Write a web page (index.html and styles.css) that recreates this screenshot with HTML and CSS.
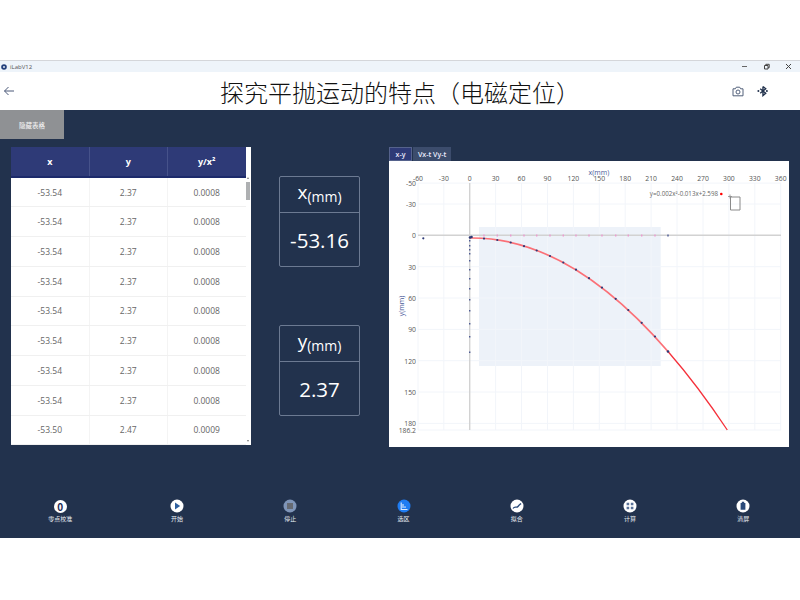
FILE: index.html
```html
<!DOCTYPE html>
<html lang="zh-CN">
<head>
    <meta charset="utf-8" />
    <title>iLabV12</title>
    <link rel="stylesheet" href="styles.css">
</head>
<body>
    <div class="top-blank"></div>

    <!-- window title bar -->
    <div class="titlebar">
        <div class="app-name">
            <svg class="app-icon" viewBox="0 0 6 6"><circle cx="3" cy="3" r="2.8" fill="#24417c"/><circle cx="3" cy="3" r="1" fill="#dfe8f5"/></svg>
            <span>iLabV12</span>
        </div>
        <div class="win-btns">
            <svg viewBox="0 0 7 7"><path d="M1 3.5h5" stroke="#666" fill="none"/></svg>
            <svg viewBox="0 0 7 7"><path d="M1.5 2.5h3.5v3.5h-3.5zM2.8 2.5v-1.2h3.4v3.4h-1.2" stroke="#444" fill="none"/></svg>
            <svg viewBox="0 0 7 7"><path d="M1 1l5 5M6 1l-5 5" stroke="#444" fill="none"/></svg>
        </div>
    </div>

    <header class="page-head">
        <svg class="back" viewBox="0 0 12 10"><path d="M11 5H1.5M5.5 1L1.5 5l4 4" stroke="#4a5878" stroke-width="1" fill="none"/></svg>
        <h1>探究平抛运动的特点（电磁定位）</h1>
        <div class="head-tools">
            <svg class="camera" viewBox="0 0 12 11"><path d="M1 2.8h2.4L4.3 1.2h3.4l.9 1.6H11v7H1z" stroke="#52607a" fill="none"/><circle cx="6" cy="6" r="2" stroke="#52607a" fill="none"/></svg>
            <svg class="bt" viewBox="0 0 12 12"><path d="M6.5 1v10l3-2.6-6-4.8M6.5 1l3 2.6-6 4.8" stroke="#22324d" stroke-width="1.5" fill="none"/><circle cx="1.5" cy="6" r="1.1" fill="#22324d"/><circle cx="10.8" cy="6" r="1.1" fill="#22324d"/></svg>
        </div>
    </header>

    <main class="main">
        <button class="hide-btn">隐藏表格</button>

        <div class="content">
            <div class="table-box">
                <table class="data-table">
                    <thead>
                        <tr><th>x</th><th>y</th><th>y/x²</th></tr>
                    </thead>
                    <tbody>
                        <tr><td>-53.54</td><td>2.37</td><td>0.0008</td></tr>
                        <tr><td>-53.54</td><td>2.37</td><td>0.0008</td></tr>
                        <tr><td>-53.54</td><td>2.37</td><td>0.0008</td></tr>
                        <tr><td>-53.54</td><td>2.37</td><td>0.0008</td></tr>
                        <tr><td>-53.54</td><td>2.37</td><td>0.0008</td></tr>
                        <tr><td>-53.54</td><td>2.37</td><td>0.0008</td></tr>
                        <tr><td>-53.54</td><td>2.37</td><td>0.0008</td></tr>
                        <tr><td>-53.54</td><td>2.37</td><td>0.0008</td></tr>
                        <tr><td>-53.50</td><td>2.47</td><td>0.0009</td></tr>
                    </tbody>
                </table>
                <div class="scrollbar"><div class="thumb"></div></div>
            </div>

            <div class="readouts">
                <div class="readout">
                    <div class="readout-name">x<small>(mm)</small></div>
                    <div class="readout-value">-53.16</div>
                </div>
                <div class="readout">
                    <div class="readout-name">y<small>(mm)</small></div>
                    <div class="readout-value">2.37</div>
                </div>
            </div>

            <div class="chart-box">
                <div class="tabs">
                    <span class="tab active">x-y</span>
                    <span class="tab">Vx-t Vy-t</span>
                </div>
                <svg class="chart" viewBox="389 161 400 286">
                    <!-- selected region -->
                    <rect x="479" y="227" width="181.7" height="139" fill="#edf2f9"/>
                    <!-- grid -->
                    <path class="grid" d="M418 183V430M443.8 183V430M495.6 183V430M521.5 183V430M547.5 183V430M573.4 183V430M599.3 183V430M625.2 183V430M651.1 183V430M677 183V430M703 183V430M728.9 183V430M754.8 183V430M780.7 183V430"/>
                    <path class="grid" d="M418 183.1H781M418 204H781M418 266.7H781M418 298H781M418 329.4H781M418 360.7H781M418 392H781M418 423.4H781M418 430H781"/>
                    <!-- axes -->
                    <path class="axis" d="M469.7 183V430M418 235.3H781"/>

                    <g class="tick-x">
                        <text x="418" y="180.5">-60</text>
                        <text x="443.8" y="180.5">-30</text>
                        <text x="469.7" y="180.5">0</text>
                        <text x="495.6" y="180.5">30</text>
                        <text x="521.5" y="180.5">60</text>
                        <text x="547.5" y="180.5">90</text>
                        <text x="573.4" y="180.5">120</text>
                        <text x="599.3" y="180.5">150</text>
                        <text x="625.2" y="180.5">180</text>
                        <text x="651.1" y="180.5">210</text>
                        <text x="677" y="180.5">240</text>
                        <text x="703" y="180.5">270</text>
                        <text x="728.9" y="180.5">300</text>
                        <text x="754.8" y="180.5">330</text>
                        <text x="780.7" y="180.5">360</text>
                    </g>
                    <g class="tick-y">
                        <text x="416" y="186">-50</text>
                        <text x="416" y="207">-30</text>
                        <text x="416" y="238">0</text>
                        <text x="416" y="269.5">30</text>
                        <text x="416" y="301">60</text>
                        <text x="416" y="332">90</text>
                        <text x="416" y="363.5">120</text>
                        <text x="416" y="395">150</text>
                        <text x="416" y="425.5">180</text>
                        <text x="416" y="432.5">186.2</text>
                    </g>
                    <text class="axis-name" x="599" y="175" text-anchor="middle">x(mm)</text>
                    <text class="axis-name" transform="translate(404 306) rotate(-90)" text-anchor="middle">y(mm)</text>

                    <!-- fitted curve: pale over the measured part, red past it -->
                    <path d="M469.7 238Q568.8 236.5 668 351.5" fill="none" stroke="#fb7077" stroke-width="1.7"/>
                    <path d="M668 351.5Q697.6 385.4 727.3 430" fill="none" stroke="#f5303a" stroke-width="1.3"/>

                    <!-- points projected on the axes -->
                    <path fill="none" stroke="#ec9ad0" stroke-width="1.4" d="M484 234.5v2M497.3 234.5v2M510.7 234.5v2M524 234.5v2M536.7 234.5v2M550 234.5v2M563.3 234.5v2M576 234.5v2M589 234.5v2M602 234.5v2M615.7 234.5v2M628.3 234.5v2M641.7 234.5v2M655 234.5v2"/>
                    <path fill="none" stroke="#4c5a94" stroke-width="1.4" d="M668 234.5v2M469.7 240v1.5M469.7 245v1.5M469.7 249v1.5M469.7 253v1.5M469.7 260v1.5M469.7 269v1.5M469.7 278v1.5M469.7 288v1.5M469.7 299v1.5M469.7 310v1.5M469.7 323v1.5M469.7 336v1.5M469.7 351.5v1.5"/>

                    <!-- measured points -->
                    <g fill="#2e3a77">
                        <circle cx="423.3" cy="238.3" r="1.1"/>
                        <circle cx="470" cy="237.5" r="1.3"/>
                        <circle cx="471.5" cy="237" r="1.3"/>
                        <circle cx="484" cy="238.6" r="1.1"/>
                        <circle cx="497.3" cy="240" r="1.1"/>
                        <circle cx="510.7" cy="242.5" r="1.1"/>
                        <circle cx="524" cy="246.2" r="1.1"/>
                        <circle cx="536.7" cy="250.5" r="1.1"/>
                        <circle cx="550" cy="256" r="1.1"/>
                        <circle cx="563.3" cy="262.5" r="1.1"/>
                        <circle cx="576" cy="269.7" r="1.1"/>
                        <circle cx="589" cy="278.2" r="1.1"/>
                        <circle cx="602" cy="287.6" r="1.1"/>
                        <circle cx="615.7" cy="298.8" r="1.1"/>
                        <circle cx="628.3" cy="310" r="1.1"/>
                        <circle cx="641.7" cy="322.8" r="1.1"/>
                        <circle cx="655" cy="336.5" r="1.1"/>
                        <circle cx="668" cy="351.5" r="1.3"/>
                    </g>

                    <!-- legend -->
                    <text class="legend" x="718" y="196" text-anchor="end">y=0.002x²-0.013x+2.598</text>
                    <circle cx="721.3" cy="194" r="1.3" fill="#f00"/>
                    <path d="M730.5 197H740V210H730.5V197" fill="none" stroke="#8a8a8a"/>
                    <path d="M728 196.5h4M730 194.5v4" fill="none" stroke="#8a8a8a" stroke-width=".8"/>
                </svg>
            </div>
        </div>

        <nav class="toolbar">
            <div class="tool">
                <span class="tool-icon zero">0</span>
                <span>零点校准</span>
            </div>
            <div class="tool">
                <svg class="tool-icon" viewBox="0 0 14 14"><circle cx="7" cy="7" r="6.5" fill="#fff"/><path d="M5 3.6l5.2 3.4L5 10.4z" fill="#2e5f9e"/></svg>
                <span>开始</span>
            </div>
            <div class="tool">
                <svg class="tool-icon" viewBox="0 0 14 14"><circle cx="7" cy="7" r="6.5" fill="#7f95b8"/><rect x="4" y="4" width="6" height="6" fill="#666a72"/></svg>
                <span>停止</span>
            </div>
            <div class="tool">
                <svg class="tool-icon" viewBox="0 0 14 14"><circle cx="7" cy="7" r="6.5" fill="#1e7cf2"/><path d="M4.2 3.5V10.5H10.5M6 5v4M8 7.2V9" fill="none" stroke="#dcebff" stroke-width="1.1"/></svg>
                <span>选区</span>
            </div>
            <div class="tool">
                <svg class="tool-icon" viewBox="0 0 14 14"><circle cx="7" cy="7" r="6.5" fill="#fff"/><path d="M3 9.5C5 6.5 6.5 9.5 8 7.5S10 5.5 11 4.5" fill="none" stroke="#2a4a7a" stroke-width="1.3"/></svg>
                <span>拟合</span>
            </div>
            <div class="tool">
                <svg class="tool-icon" viewBox="0 0 14 14"><circle cx="7" cy="7" r="6.5" fill="#fff"/><path d="M3.6 3.8h2.6v2.4H3.6zM7.8 3.8h2.6v2.4H7.8zM3.6 7.8h2.6v2.4H3.6zM7.8 7.8h2.6v2.4H7.8z" fill="#5a7298"/></svg>
                <span>计算</span>
            </div>
            <div class="tool">
                <svg class="tool-icon" viewBox="0 0 14 14"><circle cx="7" cy="7" r="6.5" fill="#fff"/><path d="M4.6 4h4.8v6.8H4.6zM5.8 2.8h2.4V4H5.8z" fill="#2a4a7a"/></svg>
                <span>清屏</span>
            </div>
        </nav>
    </main>

    <div class="bottom-blank"></div>
</body>
</html>
```

FILE: styles.css
```css
* {
    padding: 0;
    margin: 0;
    box-sizing: border-box;
}

html, body {
    height: 600px;
    overflow: hidden;
}

body {
    background: #fff;
    font-family: "Open Sans", "Noto Sans CJK SC", sans-serif;
    color: #333;
}

.top-blank {
    height: 61px;
    border-bottom: 1px solid #d4d6da;
}

.titlebar {
    height: 11px;
    background: #eef4fa;
    display: flex;
    justify-content: space-between;
    align-items: center;
}

.app-name {
    display: flex;
    align-items: center;
    gap: 3px;
    padding-left: 1px;
    font-size: 6px;
    color: #555;
}

.app-icon {
    width: 6px;
    height: 6px;
}

.win-btns {
    display: flex;
    gap: 15px;
    padding-right: 8px;
}

.win-btns svg {
    width: 7px;
    height: 7px;
}

.page-head {
    height: 38px;
    display: flex;
    align-items: center;
    justify-content: center;
    position: relative;
}

.page-head h1 {
    font-family: "Noto Sans CJK SC", sans-serif;
    font-size: 24px;
    font-weight: 300;
    color: #111;
}

.back {
    position: absolute;
    left: 3px;
    top: 14px;
    width: 12px;
    height: 10px;
}

.head-tools {
    position: absolute;
    right: 32px;
    top: 13px;
    display: flex;
    align-items: center;
    gap: 13px;
}

.camera {
    width: 12px;
    height: 11px;
}

.bt {
    width: 11px;
    height: 12px;
}

.main {
    height: 428px;
    background: #22324d;
    display: flex;
    flex-direction: column;
}

.hide-btn {
    width: 64px;
    height: 29px;
    border: none;
    background: #8f9194;
    color: #eee;
    font-family: "Noto Sans CJK SC", sans-serif;
    font-size: 6.5px;
    font-weight: 500;
}

.content {
    display: flex;
    padding: 8px 11px 0;
    height: 300px;
}

.table-box {
    width: 240px;
    height: 298px;
    background: #fff;
    display: flex;
    overflow: hidden;
}

.data-table {
    width: 234.5px;
    border-collapse: collapse;
    table-layout: fixed;
    align-self: flex-start;
}

.data-table th {
    height: 30px;
    background: #2e3a77;
    border-bottom: 2px solid #1c2a6b;
    border-left: 1px solid #46528a;
    color: #fff;
    font-size: 9px;
    font-weight: 700;
}

.data-table th:first-child {
    border-left: none;
}

.data-table td {
    height: 29.75px;
    border-bottom: 1px solid #f0f0f0;
    border-left: 1px solid #f4f4f4;
    text-align: center;
    color: #666;
    font-size: 8.5px;
}

.data-table td:first-child {
    border-left: none;
}

.scrollbar {
    flex: 1;
    display: flex;
    flex-direction: column;
    align-items: center;
    padding: 30px 0 3px;
}

/* the two little arrows at the ends of the scrollbar */
.scrollbar::before,
.scrollbar::after {
    content: "";
    border-left: 1.5px solid transparent;
    border-right: 1.5px solid transparent;
}

.scrollbar::before {
    border-bottom: 2px solid #777;
}

.scrollbar::after {
    margin-top: auto;
    border-top: 2px solid #777;
}

.thumb {
    width: 4px;
    height: 18px;
    margin-top: 3px;
    background: #aeb0b2;
}

.readouts {
    width: 81px;
    margin-left: 28px;
    padding-top: 29px;
    display: flex;
    flex-direction: column;
    gap: 58px;
}

.readout {
    height: 91px;
    flex-shrink: 0;
    border: 1px solid #6c7a92;
    border-radius: 2px;
    color: #fff;
    display: flex;
    flex-direction: column;
}

.readout-name {
    height: 36px;
    border-bottom: 1px solid #6c7a92;
    text-align: center;
    font-size: 19px;
    line-height: 30px;
}

.readout-name small {
    font-size: 14px;
    vertical-align: -3px;
}

.readout-value {
    flex: 1;
    display: flex;
    align-items: center;
    justify-content: center;
    font-size: 20.5px;
}

.chart-box {
    width: 400px;
    margin-left: 29px;
}

.tabs {
    height: 14px;
    display: flex;
    gap: 1px;
}

.tab {
    display: flex;
    align-items: center;
    padding: 0 5px;
    background: #3c4c6c;
    color: #eef;
    font-size: 7px;
    font-weight: 600;
}

.tab.active {
    width: 23px;
    justify-content: center;
    padding: 0;
    background: #2e3a77;
    border: 1px solid #55628c;
}

.chart {
    display: block;
    width: 400px;
    height: 286px;
    background: #fff;
}

.grid {
    fill: none;
    stroke: #f2f5fa;
    stroke-width: 1;
}

.axis {
    fill: none;
    stroke: #d2d2d2;
    stroke-width: 1.4;
}

.tick-x text,
.tick-y text {
    font-size: 6.8px;
    fill: #555;
}

.legend {
    font-size: 6.2px;
    fill: #666;
}

.tick-x text {
    text-anchor: middle;
}

.tick-y text {
    text-anchor: end;
}

.axis-name {
    font-size: 7px;
    fill: #4a5a9a;
}

.toolbar {
    flex: 1;
    display: flex;
    padding-top: 60px;
}

.tool {
    flex: 1;
    display: flex;
    flex-direction: column;
    align-items: center;
    gap: 2px;
    color: #e8ecf2;
    font-family: "Noto Sans CJK SC", sans-serif;
    font-size: 6px;
    line-height: 8px;
}

/* first button sits a little apart from the others */
.tool:first-child {
    flex: 0 0 120.3px;
}

.tool-icon {
    width: 14px;
    height: 14px;
}

.zero {
    width: 13px;
    height: 13px;
    margin: .5px;
    background: #fff;
    border-radius: 50%;
    color: #1d2b55;
    text-align: center;
    font-size: 10px;
    font-weight: 700;
    line-height: 13px;
}

.bottom-blank {
    height: 62px;
}
```
